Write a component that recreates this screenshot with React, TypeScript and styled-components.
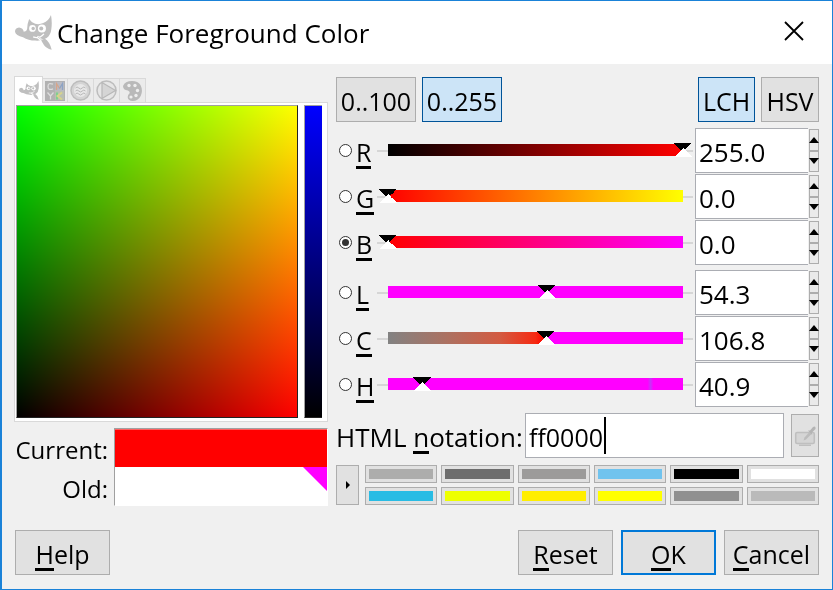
import React, { useState } from 'react';
import styled, { createGlobalStyle, css } from 'styled-components';

const Global = createGlobalStyle`
  *, *::before, *::after { box-sizing: border-box; }
  html, body, #root { height: 100%; }
  body { margin: 0; background: #f0f0f0; color: #000; }
  body, button, input { font-family: "Open Sans", "Segoe UI", sans-serif; font-size: 25px; line-height: 34px; color: #000; }
`;

const Dialog = styled.main`
  display: flex;
  flex-direction: column;
  min-height: 100%;
  border: 1px solid #1a82d8;
  border-left-width: 2px;
  background: #f0f0f0;
`;

const TitleBar = styled.header`
  display: flex;
  align-items: center;
  height: 63px;
  padding: 0 22px 0 13px;
  background: #fff;
`;

const Title = styled.h1`
  flex: 1;
  margin: 0 0 0 5px;
  font: inherit;
  font-size: 26px;
  white-space: nowrap;
`;

const CloseButton = styled.button`
  display: flex;
  margin: 0 6px 4px 0;
  padding: 0;
  border: 0;
  background: none;
`;

const Body = styled.div`
  display: grid;
  grid-template-columns: 314px minmax(0, 1fr);
  column-gap: 8px;
  padding: 12px 13px 0 12px;
`;

const Column = styled.div`
  display: flex;
  flex-direction: column;
`;

const Tabs = styled.div`
  display: flex;
  align-items: flex-end;
  height: 26px;
`;

const Tab = styled.button<{ $active?: boolean }>`
  display: flex;
  align-items: center;
  justify-content: center;
  width: ${(p) => (p.$active ? 29 : 26)}px;
  height: ${(p) => (p.$active ? 27 : 24)}px;
  margin: 0 0 ${(p) => (p.$active ? -1 : 0)}px;
  padding: 0;
  border: 1px solid #d9d9d9;
  border-bottom: 0;
  background: ${(p) => (p.$active ? '#fff' : '#ebebeb')};
  z-index: ${(p) => (p.$active ? 1 : 0)};
  &:not(:first-child) { border-left-width: 0; }
  &:nth-child(2) { width: 25px; }
  svg { flex: none; }
`;

const Picker = styled.div`
  display: flex;
  gap: 6px;
  height: 320px;
  padding: 2px 5px 2px 1px;
  border: 1px solid #d9d9d9;
  background: #fff;
`;

const Plane = styled.div`
  flex: 1;
  margin-bottom: 1px;
  border: 1px solid #222;
  border-top-color: #a0a0a0;
  border-left-color: #a0a0a0;
  background: linear-gradient(to top, #000, #0f0);
  position: relative;
  &::after {
    content: "";
    position: absolute;
    inset: 0;
    background: linear-gradient(to right, #000, #f00);
    mix-blend-mode: screen;
  }
`;

const Strip = styled.div`
  width: 18px;
  margin-bottom: 1px;
  border-top: 1px solid #a0a0a0;
  border-left: 1px solid #a0a0a0;
  border-bottom: 1px solid #222;
  background: linear-gradient(to bottom, #00f, #000);
`;

const Compare = styled.div`
  display: grid;
  grid-template-columns: 94px minmax(0, 1fr);
  column-gap: 6px;
  margin-top: 6px;
`;

const CompareLabels = styled.div`
  padding-top: 2px;
  text-align: right;
  font-size: 24px;
  line-height: 39px;
`;

const Swatches = styled.div`
  display: flex;
  flex-direction: column;
  align-items: flex-end;
  height: 78px;
  border: 1px solid #fff;
  border-top-color: #a0a0a0;
  border-left-color: #a0a0a0;
  background: #fff;
`;

const CurrentColor = styled.div`
  width: 100%;
  height: 38px;
  border-top: 1px solid #ff6060;
  background: #f00;
`;

const raised = css`
  border: 1px solid #adadad;
  background: #e1e1e1;
`;

const Modes = styled.div`
  display: flex;
  gap: 6px;
  margin-top: 1px;
`;

const ModeButton = styled.button<{ $on?: boolean; $width: number; $push?: boolean }>`
  width: ${(p) => p.$width}px;
  height: 45px;
  margin-left: ${(p) => (p.$push ? 'auto' : '0')};
  padding: 3px 0 0;
  white-space: nowrap;
  ${raised}
  ${(p) => p.$on && css`border-color: #005499; background: #cce4f7;`}
`;

const Channels = styled.div`
  display: flex;
  flex-direction: column;
  gap: 1px;
  margin-top: 6px;
`;

const ChannelRow = styled.div<{ $gap?: boolean }>`
  display: grid;
  grid-template-columns: 15px 26px minmax(0, 1fr) 113px 11px;
  align-items: start;
  height: 45px;
  margin-top: ${(p) => (p.$gap ? 4 : 0)}px;
`;

const Radio = styled.input`
  appearance: none;
  display: flex;
  align-items: center;
  justify-content: center;
  width: 13px;
  height: 13px;
  margin: 16px 0 0 3px;
  border: 1px solid #333;
  border-radius: 50%;
  background: #fff;
  &:checked::after {
    content: "";
    width: 7px;
    height: 7px;
    border-radius: 50%;
    background: #333;
  }
`;

const Key = styled.span`
  display: inline-block;
  border-bottom: 3px solid #000;
  line-height: 28px;
`;

const ChannelLabel = styled.label`
  padding: 10px 0 0 5px;
  line-height: 28px;
`;

const SliderBox = styled.div`
  position: relative;
  height: 20px;
  margin: 14px 2px 0 0;
  background: linear-gradient(#d6d6d6, #d6d6d6) 0 8px / 100% 2px no-repeat;
`;

const Track = styled.div<{ $fill: string }>`
  height: 14px;
  margin: 0 10px 0 11px;
  border-top: 2px solid #f0f0f0;
  background: ${(p) => p.$fill};
`;

const Range = styled.input`
  position: absolute;
  inset: 0 0 auto 1px;
  width: calc(100% - 1px);
  height: 15px;
  margin: 0;
  appearance: none;
  background: none;
  &::-webkit-slider-thumb {
    appearance: none;
    width: 20px;
    height: 14px;
    background:
      conic-gradient(from 135deg at 50% 5px, #fff 90deg, transparent 0) 0 0 / 100% 100%,
      conic-gradient(from -45deg at 50% 9px, #000 90deg, transparent 0) 0 0 / 100% 100%;
  }
`;

const ValueInput = styled.input`
  width: 100%;
  height: 45px;
  padding: 2px 0 0 3px;
  border: 1px solid #abadb3;
  border-right: 0;
  background: #fff;
  font-size: 26px;
`;

const Stepper = styled.div`
  display: flex;
  flex-direction: column;
  height: 43px;
  margin: 1px 0 0 1px;
`;

const StepButton = styled.button`
  display: flex;
  flex: 1;
  align-items: center;
  justify-content: center;
  padding: 0;
  ${raised}
  background: #eaeaea;
  svg { flex: none; }
`;

const Notation = styled.div`
  display: grid;
  grid-template-columns: 189px minmax(0, 1fr) 28px;
  align-items: center;
  margin-top: 6px;
`;

const NotationLabel = styled.label`
  padding-top: 2px;
  font-size: 26px;
  white-space: nowrap;
`;

const HexField = styled.div`
  display: flex;
  align-items: center;
  height: 45px;
  margin-right: 7px;
  border: 1px solid #abadb3;
  background: #fff;
`;

const HexInput = styled.input`
  width: 78px;
  height: 40px;
  padding: 2px 0 0 3px;
  border: 0;
  outline: 0;
  background: none;
`;

const Caret = styled.span`
  width: 2px;
  height: 37px;
  background: #000;
`;

const PickButton = styled.button`
  display: flex;
  align-items: center;
  justify-content: center;
  height: 43px;
  padding: 0;
  ${raised}
`;

const Palette = styled.div`
  display: grid;
  grid-template-columns: 23px minmax(0, 1fr);
  gap: 6px;
  margin-top: 7px;
`;

const HistoryButton = styled.button`
  display: flex;
  align-items: center;
  justify-content: center;
  padding: 0;
  ${raised}
`;

const History = styled.div`
  display: grid;
  grid-template-columns: repeat(6, minmax(0, 1fr));
  gap: 4px;
`;

const HistoryColor = styled.button<{ $color: string }>`
  display: flex;
  height: 18px;
  padding: 3px;
  ${raised}
  &::before {
    content: "";
    flex: 1;
    height: 10px;
    background: ${(p) => p.$color};
  }
`;

const Actions = styled.footer`
  display: flex;
  gap: 8px;
  padding: 22px 13px 0;
`;

const ActionButton = styled.button<{ $primary?: boolean; $first?: boolean }>`
  width: 95px;
  height: 45px;
  margin-right: ${(p) => (p.$first ? 'auto' : '0')};
  padding: 2px 0 0;
  white-space: nowrap;
  ${raised}
  ${(p) => p.$primary && css`border: 2px solid #0078d7;`}
`;

const Wilber = ({ width, height }: { width: number; height: number }) => (
  <svg width={width} height={height} viewBox="18 18 110 104" aria-hidden="true">
    <path
      fill="#bfbfbf"
      d="M60 30Q68 42 78 44Q90 47 102 42Q118 36 125 18Q129 40 126 60Q124 78 112 86Q96 96 78 94Q58 94 42 84Q20 80 18 68Q18 56 30 55Q42 56 44 68Q52 68 54 60Q55 42 60 30Z"
    />
    <circle cx="70" cy="58" r="10" fill="#fff" />
    <circle cx="98" cy="58" r="12" fill="#fff" />
    <circle cx="72" cy="58" r="5" fill="#bfbfbf" />
    <circle cx="96" cy="58" r="6" fill="#bfbfbf" />
    <path d="M72 83Q90 90 104 74" fill="none" stroke="#fff" strokeWidth="4" />
    <path d="m84 82 16 14" stroke="#fff" strokeWidth="7" />
    <path d="M96 94 106 88Q121 97 127 121 110 117 104 107Z" fill="#bfbfbf" />
    <path d="m86 83 16 13" stroke="#bfbfbf" strokeWidth="2" />
  </svg>
);

const CmykIcon = () => (
  <svg width="20" height="20" viewBox="0 0 20 20" aria-hidden="true">
    <rect width="20" height="20" fill="#b2b2b2" />
    <rect x="10" y="1" width="9" height="9" fill="#b9bac2" />
    <rect x="10" y="10" width="9" height="9" fill="#b9bfb3" />
    <g fill="none" strokeWidth="1.300">
      <path d="M8 3.200Q3 1.200 3 5.500T8 7.800" stroke="#ddd" />
      <path d="M11.500 9V2.500l3 5" stroke="#d5a58a" />
      <path d="m14.500 7.500 3-5V9" stroke="#8da3c4" />
      <path d="m2.500 11.500 3 3.500 3-3.500M5.500 15v3.500" stroke="#ddd" />
      <path d="M12 11.500v7" stroke="#7fd08f" strokeWidth="2" />
      <path d="m17 11.500-4.500 3.500 4.500 3.500" stroke="#d8d38c" strokeWidth="1.800" />
    </g>
  </svg>
);

const WaterIcon = () => (
  <svg width="21" height="21" viewBox="0 0 21 21" fill="none" aria-hidden="true">
    <circle cx="10.500" cy="10.500" r="9.500" fill="#d4d4d4" stroke="#bdbdbd" strokeWidth="1.500" />
    <circle cx="10.500" cy="10.500" r="6.500" fill="#e8e8e8" />
    <path d="M5.500 8q1.500-2 3.300 0t3.400 0 3.300 0M5.500 11q1.500-2 3.300 0t3.400 0 3.300 0M5.500 14q1.500-2 3.300 0t3.400 0 3.300 0" stroke="#b8b8b8" />
  </svg>
);

const WheelIcon = () => (
  <svg width="21" height="21" viewBox="0 0 21 21" aria-hidden="true">
    <circle cx="10.500" cy="10.500" r="9.500" fill="#e6e6e6" stroke="#bdbdbd" strokeWidth="1.500" />
    <path d="M6 2.500v16l13.500-8z" fill="#d5d5d5" stroke="#b8b8b8" strokeWidth="1.200" />
  </svg>
);

const PaletteIcon = () => (
  <svg width="19" height="20" viewBox="0 0 19 20" aria-hidden="true">
    <path fill="#b9b9b9" d="M0 5Q2 0 9 0q6 .2 8.500 4 2.800 5.500.2 11-2.700 5-8 5-5-.3-5-4 .1-2.200 1.700-3.500 1-1.800-1.500-3Q0 9 0 5z" />
    <g fill="#eee">
      <circle cx="6" cy="4.500" r="1.700" />
      <circle cx="12" cy="4.500" r="1.700" />
      <circle cx="14.500" cy="9.500" r="1.700" />
      <circle cx="13" cy="14.500" r="1.700" />
      <circle cx="8" cy="16" r="1.600" />
    </g>
  </svg>
);

const ScreenPickIcon = () => (
  <svg width="22" height="20" viewBox="0 0 22 20" aria-hidden="true">
    <rect x="1.700" y="6.500" width="18.600" height="11" rx="1.500" fill="#d5d5d5" stroke="#bfbfbf" strokeWidth="1.600" />
    <path d="M5 18.500h12v1.500H5z" fill="#bfbfbf" />
    <path d="m9.500 14.500 1-3 5-5.500 2 2-5.500 5.500z" fill="#bcbcbc" />
    <path d="m14 4.500 2 .1L19 1q2-1 2.500.5.500 1.500-1 2.500L18 6.500l.2 2.500z" fill="#b4b4b4" />
  </svg>
);

const Arrow = ({ down }: { down?: boolean }) => (
  <svg width="10" height="6" viewBox="0 0 10 6" aria-hidden="true">
    <path d={down ? 'M0 0h10L5 6z' : 'M0 6h10L5 0z'} />
  </svg>
);

type Channel = { id: string; name: string; value: string; pos: number; fill: string; gap?: boolean };

const channels: Channel[] = [
  { id: 'R', name: 'Red', value: '255.0', pos: 100, fill: 'linear-gradient(to right, #000, #f00)' },
  { id: 'G', name: 'Green', value: '0.0', pos: 0, fill: 'linear-gradient(to right, #f00, #ff0)' },
  { id: 'B', name: 'Blue', value: '0.0', pos: 0, fill: 'linear-gradient(to right, #f00, #f0f)' },
  { id: 'L', name: 'Lightness', value: '54.3', pos: 54, fill: '#f0f', gap: true },
  {
    id: 'C', name: 'Chroma', value: '106.8', pos: 53.4,
    fill: 'linear-gradient(to right, #828282, #ac7161 20%, #d35a41 38%, #f62a12 50%, #f00 53%, #f0f 53%)',
  },
  {
    id: 'H', name: 'Hue', value: '40.9', pos: 11.4,
    fill: 'linear-gradient(to right, #f0f 88%, #c832f8 89%, #f0f 90%)',
  },
];

const history = [
  '#adadac', '#6d6d6d', '#9c9b9a', '#70c3ee', '#000000', '#ffffff',
  '#29bce4', '#eeff00', '#ffee00', '#ffff00', '#909090', '#bababa',
];

export default function App() {
  const [model, setModel] = useState('B');
  const [hex, setHex] = useState('ff0000');

  return (
    <>
      <Global />
      <Dialog>
        <TitleBar>
          <Wilber width={37} height={35} />
          <Title>Change Foreground Color</Title>
          <CloseButton aria-label="Close">
            <svg width="20" height="20" viewBox="0 0 20 20" aria-hidden="true">
              <path d="m1 1 18 18M19 1 1 19" stroke="#000" strokeWidth="1.800" />
            </svg>
          </CloseButton>
        </TitleBar>

        <Body>
          <Column>
            <Tabs role="tablist">
              <Tab role="tab" aria-selected $active aria-label="GIMP"><Wilber width={20} height={19} /></Tab>
              <Tab role="tab" aria-label="CMYK"><CmykIcon /></Tab>
              <Tab role="tab" aria-label="Watercolor"><WaterIcon /></Tab>
              <Tab role="tab" aria-label="Wheel"><WheelIcon /></Tab>
              <Tab role="tab" aria-label="Palette"><PaletteIcon /></Tab>
            </Tabs>
            <Picker>
              <Plane />
              <Strip />
            </Picker>
            <Compare>
              <CompareLabels>
                <div>Current:</div>
                <div>Old:</div>
              </CompareLabels>
              <Swatches>
                <CurrentColor />
                <svg width="24" height="24" viewBox="0 0 24 24" aria-hidden="true">
                  <path d="M0 0h24v24z" fill="#f0f" />
                </svg>
              </Swatches>
            </Compare>
          </Column>

          <Column>
            <Modes>
              <ModeButton $width={80}>0..100</ModeButton>
              <ModeButton $width={80} $on>0..255</ModeButton>
              <ModeButton $width={57} $on $push>LCH</ModeButton>
              <ModeButton $width={58}>HSV</ModeButton>
            </Modes>
            <Channels>
              {channels.map((c) => (
                <ChannelRow key={c.id} $gap={c.gap}>
                  <Radio type="radio" name="model" id={`model-${c.id}`} checked={model === c.id} onChange={() => setModel(c.id)} />
                  <ChannelLabel htmlFor={`model-${c.id}`}><Key>{c.id}</Key></ChannelLabel>
                  <SliderBox>
                    <Track $fill={c.fill} />
                    <Range type="range" min="0" max="100" step="0.1" defaultValue={c.pos} aria-label={c.name} />
                  </SliderBox>
                  <ValueInput defaultValue={c.value} aria-label={`${c.name} value`} />
                  <Stepper>
                    <StepButton aria-label={`Increase ${c.name}`}><Arrow /></StepButton>
                    <StepButton aria-label={`Decrease ${c.name}`}><Arrow down /></StepButton>
                  </Stepper>
                </ChannelRow>
              ))}
            </Channels>
            <Notation>
              <NotationLabel htmlFor="hex">HTML <Key>n</Key>otation:</NotationLabel>
              <HexField>
                <HexInput id="hex" value={hex} onChange={(e) => setHex(e.target.value)} />
                <Caret />
              </HexField>
              <PickButton aria-label="Pick from screen"><ScreenPickIcon /></PickButton>
            </Notation>
            <Palette>
              <HistoryButton aria-label="Add to history">
                <svg width="4" height="8" viewBox="0 0 4 8" aria-hidden="true"><path d="M0 0v8l4-4z" /></svg>
              </HistoryButton>
              <History>
                {history.map((color) => <HistoryColor key={color} $color={color} aria-label={color} />)}
              </History>
            </Palette>
          </Column>
        </Body>

        <Actions>
          <ActionButton $first><Key>H</Key>elp</ActionButton>
          <ActionButton><Key>R</Key>eset</ActionButton>
          <ActionButton $primary><Key>O</Key>K</ActionButton>
          <ActionButton><Key>C</Key>ancel</ActionButton>
        </Actions>
      </Dialog>
    </>
  );
}
